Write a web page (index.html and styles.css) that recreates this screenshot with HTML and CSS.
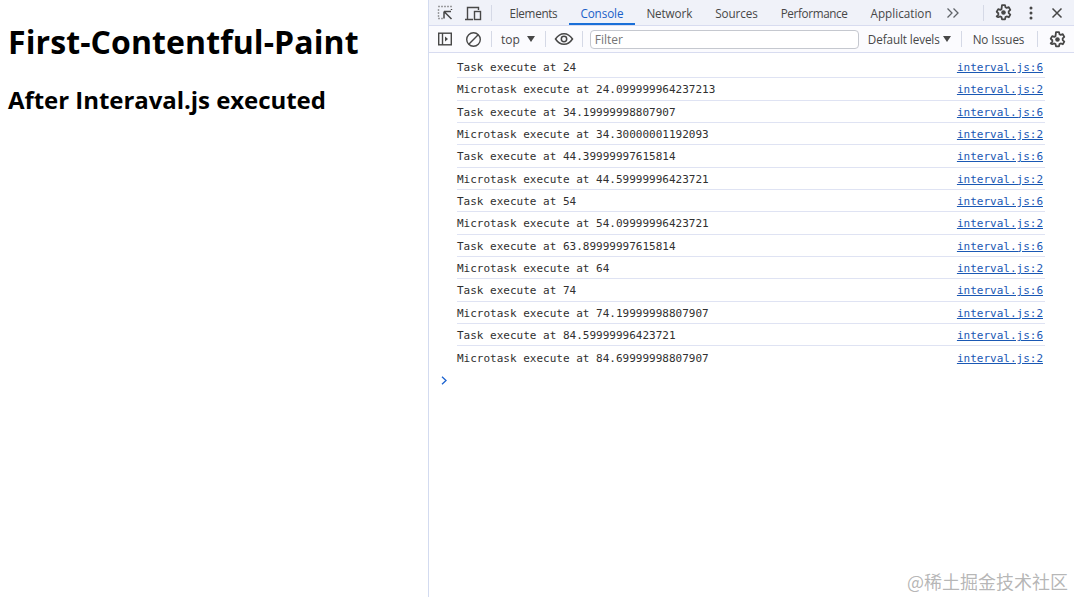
FILE: index.html
```html
<!DOCTYPE html>
<html lang="en">
<head>
<meta charset="utf-8">
<title>First-Contentful-Paint</title>
<link rel="stylesheet" href="styles.css">
</head>
<body>
<main class="page">
  <h1>First-Contentful-Paint</h1>
  <h2>After Interaval.js executed</h2>
</main>
<section class="devtools">
  <nav class="tabbar">
    <span class="icon-btn first"><svg width="18" height="18" viewBox="0 0 18 18" fill="none" stroke="#474747"><path d="M2.500 2.500h1M5.500 2.500h1M8.500 2.500h1M11.500 2.500h1M14.500 2.500h1M2.500 5.500v1M2.500 8.500v1M2.500 11.500v1M2.500 14.500h1M5.500 14.500h1M15.500 5v1" stroke-width="1.400"/><path d="M8 7.500h7M8 7.500v7M8.500 8l7 7" stroke-width="1.500"/></svg></span>
    <span class="icon-btn second"><svg width="18" height="18" viewBox="0 0 18 18" fill="none" stroke="#474747" stroke-width="1.400"><path d="M1 15.500h8M3.500 15V3.500h11V6"/><rect x="10.500" y="7.500" width="6" height="8"/></svg></span>
    <span class="divider"></span>
    <a class="tab t-elements">Elements</a>
    <a class="tab active">Console</a>
    <a class="tab">Network</a>
    <a class="tab">Sources</a>
    <a class="tab t-performance">Performance</a>
    <a class="tab t-application">Application</a>
    <span class="icon-btn more"><svg width="14" height="12" viewBox="0 0 14 12" fill="none" stroke="#5f6368" stroke-width="1.300"><path d="M1.500 1.500 6 6l-4.500 4.500M7.500 1.500 12 6l-4.500 4.500"/></svg></span>
    <span class="spring"></span>
    <span class="divider"></span>
    <span class="icon-btn gear"><svg width="17" height="17" viewBox="0 0 18 18"><use href="#gear"/></svg></span>
    <span class="icon-btn kebab"><svg width="4" height="14" viewBox="0 0 4 14" fill="#474747"><circle cx="2" cy="2" r="1.500"/><circle cx="2" cy="7" r="1.500"/><circle cx="2" cy="12" r="1.500"/></svg></span>
    <span class="icon-btn close"><svg width="12" height="12" viewBox="0 0 12 12" stroke="#474747" stroke-width="1.500"><path d="M1.500 1.500l9 9M10.500 1.500l-9 9"/></svg></span>
  </nav>
  <div class="toolbar">
    <span class="icon-btn sidebar"><svg width="16" height="16" viewBox="0 0 16 16" fill="none" stroke="#474747" stroke-width="1.400"><rect x="1.700" y="2.200" width="12.600" height="11.600"/><path d="M5.500 2v12"/><path d="M8 5.500 11 8l-3 2.500z" fill="#474747" stroke="none"/></svg></span>
    <span class="icon-btn block"><svg width="17" height="17" viewBox="0 0 17 17" fill="none" stroke="#474747" stroke-width="1.400"><circle cx="8.500" cy="8.500" r="6.800"/><path d="M3.800 13.200 13.200 3.800"/></svg></span>
    <span class="divider"></span>
    <span class="context">top</span>
    <span class="caret"></span>
    <span class="divider"></span>
    <span class="icon-btn eye"><svg width="20" height="14" viewBox="0 0 20 14" fill="none" stroke="#474747" stroke-width="1.500"><path d="M1.500 7C4 3.300 6.800 1.700 10 1.700S16 3.300 18.500 7C16 10.700 13.200 12.300 10 12.300S4 10.700 1.500 7z"/><circle cx="10" cy="7" r="2.700"/></svg></span>
    <span class="divider"></span>
    <span class="filter">Filter</span>
    <span class="levels">Default levels</span>
    <span class="caret small"></span>
    <span class="divider"></span>
    <span class="issues">No Issues</span>
    <span class="divider"></span>
    <span class="icon-btn gear2"><svg width="17" height="17" viewBox="0 0 18 18"><use href="#gear"/></svg></span>
  </div>
  <div class="console">
    <div class="row"><span>Task execute at 24</span><a>interval.js:6</a></div>
    <div class="row"><span>Microtask execute at 24.099999964237213</span><a>interval.js:2</a></div>
    <div class="row"><span>Task execute at 34.19999998807907</span><a>interval.js:6</a></div>
    <div class="row"><span>Microtask execute at 34.30000001192093</span><a>interval.js:2</a></div>
    <div class="row"><span>Task execute at 44.39999997615814</span><a>interval.js:6</a></div>
    <div class="row"><span>Microtask execute at 44.59999996423721</span><a>interval.js:2</a></div>
    <div class="row"><span>Task execute at 54</span><a>interval.js:6</a></div>
    <div class="row"><span>Microtask execute at 54.09999996423721</span><a>interval.js:2</a></div>
    <div class="row"><span>Task execute at 63.89999997615814</span><a>interval.js:6</a></div>
    <div class="row"><span>Microtask execute at 64</span><a>interval.js:2</a></div>
    <div class="row"><span>Task execute at 74</span><a>interval.js:6</a></div>
    <div class="row"><span>Microtask execute at 74.19999998807907</span><a>interval.js:2</a></div>
    <div class="row"><span>Task execute at 84.59999996423721</span><a>interval.js:6</a></div>
    <div class="row last"><span>Microtask execute at 84.69999998807907</span><a>interval.js:2</a></div>
    <div class="prompt"><svg width="7" height="9" viewBox="0 0 7 9" fill="none" stroke="#1a62d0" stroke-width="1.300"><path d="M1 .8 5 4.500 1 8.200"/></svg></div>
  </div>
</section>
<div class="watermark">@稀土掘金技术社区</div>
<svg class="defs" width="0" height="0" aria-hidden="true">
  <defs>
    <g id="gear" fill="none" stroke="#474747">
      <path d="M7.400 1.500h3.200l.5 2.300 1.300.7 2.200-.8 1.600 2.800-1.700 1.600v1.800l1.700 1.600-1.600 2.800-2.200-.8-1.300.7-.5 2.300H7.400l-.5-2.300-1.300-.7-2.200.8L1.800 13.500l1.700-1.600v-1.800L1.800 8.500l1.600-2.800 2.200.8 1.300-.7z" transform="translate(0 -.3)" stroke-width="1.900" stroke-linejoin="round"/>
      <circle cx="9" cy="9" r="2.400" fill="#474747" stroke="none"/>
    </g>
  </defs>
</svg>
</body>
</html>
```

FILE: styles.css
```css
* { box-sizing: border-box; }
html, body { height: 100%; }
body {
  margin: 0;
  display: flex;
  height: 597px;
  overflow: hidden;
  background: #fff;
  font-family: "Open Sans", "Noto Sans", sans-serif;
  color: #000;
}
.page { width: 428px; flex: none; padding: 0 8px; }
h1 { margin: 20px 0 0; font-size: 32px; line-height: 44px; font-weight: 700; letter-spacing: .1px; white-space: nowrap; }
h2 { margin: 19px 0 0; font-size: 24px; line-height: 33px; font-weight: 700; letter-spacing: -.05px; white-space: nowrap; }
.devtools { flex: 1; min-width: 0; border-left: 1px solid #d3dbf0; display: flex; flex-direction: column; }
.tabbar {
  height: 26px; display: flex; align-items: center; flex: none;
  background: #f0f2f9; border-bottom: 1px solid #d8dcf0;
  font-size: 12px; color: #474747;
}
.icon-btn { display: flex; align-items: center; justify-content: center; flex: none; }
.first { margin-left: 7px; width: 18px; }
.second { margin-left: 10px; width: 18px; }
.divider { width: 1px; height: 16px; background: #d5d9e6; flex: none; }
.second + .divider { margin-left: 9px; }
.tab { height: 25px; padding: 0 11.500px; display: flex; align-items: center; white-space: nowrap; font-size: 11.700px; letter-spacing: -.1px; }
.tabbar .divider + .tab { margin-left: 6px; }
.tab.active { color: #1a5fc8; box-shadow: inset 0 -2px 0 #1a6fd8; }
.t-elements { letter-spacing: -.3px; }
.t-performance { letter-spacing: -.35px; }
.t-application { letter-spacing: 0; }
.more { margin-left: 3px; width: 14px; }
.spring { flex: 1; }
.gear { margin: 0 0 0 11px; width: 17px; }
.kebab { margin-left: 17px; width: 4px; }
.close { margin: 0 11px 0 18px; width: 12px; }
.toolbar {
  height: 27px; flex: none; display: flex; align-items: center;
  background: #fbfbfe; border-bottom: 1px solid #d8dcf0;
  font-size: 12px; color: #474747;
}
.sidebar { margin-left: 8px; width: 16px; }
.block { margin-left: 12px; width: 17px; }
.block + .divider { margin-left: 9px; }
.context { margin-left: 9px; }
.caret { width: 0; height: 0; margin-left: 7px; border: 4px solid transparent; border-top: 6px solid #474747; border-bottom: 0; }
.caret + .divider { margin-left: 10px; }
.eye { margin-left: 8px; width: 20px; }
.eye + .divider { margin-left: 8px; }
.filter {
  margin-left: 7px; width: 269px; height: 19px; padding-left: 4px;
  border: 1px solid #c5c8cf; border-radius: 4px; color: #757575;
  display: flex; align-items: center; background: #fff;
}
.levels { margin-left: 9px; white-space: nowrap; font-size: 11.700px; letter-spacing: -.1px; }
.caret.small { margin-left: 3px; }
.small + .divider { margin-left: 10px; }
.issues { margin-left: 11px; white-space: nowrap; font-size: 11.700px; letter-spacing: -.1px; }
.issues + .divider { margin-left: 13px; }
.gear2 { margin-left: 11px; width: 17px; }
.console { flex: 1; background: #fff; padding-top: 3px; font-family: "DejaVu Sans Mono", "Liberation Mono", monospace; font-size: 11px; color: #303030; }
.row {
  height: 22.350px; margin: 0 29px 0 28px; padding: 1.500px 2px 0 0;
  display: flex; align-items: center; justify-content: space-between;
  border-bottom: 1px solid #dfe3f3; white-space: pre;
}
.row.last { border-bottom: 0; }
.row a { color: #1a58b4; text-decoration: underline; }
.prompt { margin: 6px 0 0 12px; height: 12px; display: flex; align-items: center; }
.watermark {
  position: absolute; right: 6px; top: 570px;
  font-family: "Noto Sans CJK SC", sans-serif; font-size: 18px; line-height: 22px;
  color: rgba(120,120,120,.55);
}
.defs { position: absolute; }
```
